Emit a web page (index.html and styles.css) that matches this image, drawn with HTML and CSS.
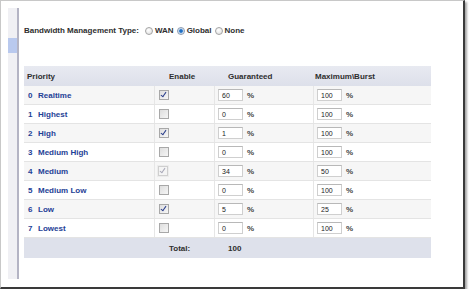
FILE: index.html
```html
<!DOCTYPE html>
<html lang="en">
  <head>
    <meta charset="UTF-8" />
    <title>Bandwidth Management</title>
    <link rel="stylesheet" href="styles.css">
  </head>
  <body>
    <div class="window">
      <!-- Sidebar -->
      <aside class="sidebar">
        <div class="side-active"></div>
      </aside>

      <!-- Main -->
      <main class="main">
        <div class="type-row">
          <span class="type-label">Bandwidth Management Type:</span>
          <span class="radio"></span><span class="opt">WAN</span>
          <span class="radio on"></span><span class="opt">Global</span>
          <span class="radio"></span><span class="opt">None</span>
        </div>

        <div class="qos">
          <div class="head">
            <span>Priority</span>
            <span>Enable</span>
            <span>Guaranteed</span>
            <span>Maximum\Burst</span>
          </div>

          <div class="row alt">
            <div class="cell name"><span class="num">0</span>Realtime</div>
            <div class="cell"><span class="cb checked"></span></div>
            <div class="cell"><span class="field">60</span><span class="pct">%</span></div>
            <div class="cell"><span class="field">100</span><span class="pct">%</span></div>
          </div>
          <div class="row">
            <div class="cell name"><span class="num">1</span>Highest</div>
            <div class="cell"><span class="cb"></span></div>
            <div class="cell"><span class="field">0</span><span class="pct">%</span></div>
            <div class="cell"><span class="field">100</span><span class="pct">%</span></div>
          </div>
          <div class="row alt">
            <div class="cell name"><span class="num">2</span>High</div>
            <div class="cell"><span class="cb checked"></span></div>
            <div class="cell"><span class="field">1</span><span class="pct">%</span></div>
            <div class="cell"><span class="field">100</span><span class="pct">%</span></div>
          </div>
          <div class="row">
            <div class="cell name"><span class="num">3</span>Medium High</div>
            <div class="cell"><span class="cb"></span></div>
            <div class="cell"><span class="field">0</span><span class="pct">%</span></div>
            <div class="cell"><span class="field">100</span><span class="pct">%</span></div>
          </div>
          <div class="row alt">
            <div class="cell name"><span class="num">4</span>Medium</div>
            <div class="cell"><span class="cb-wrap"><span class="cb checked disabled"></span></span></div>
            <div class="cell"><span class="field">34</span><span class="pct">%</span></div>
            <div class="cell"><span class="field">50</span><span class="pct">%</span></div>
          </div>
          <div class="row">
            <div class="cell name"><span class="num">5</span>Medium Low</div>
            <div class="cell"><span class="cb"></span></div>
            <div class="cell"><span class="field">0</span><span class="pct">%</span></div>
            <div class="cell"><span class="field">100</span><span class="pct">%</span></div>
          </div>
          <div class="row alt">
            <div class="cell name"><span class="num">6</span>Low</div>
            <div class="cell"><span class="cb checked"></span></div>
            <div class="cell"><span class="field">5</span><span class="pct">%</span></div>
            <div class="cell"><span class="field">25</span><span class="pct">%</span></div>
          </div>
          <div class="row">
            <div class="cell name"><span class="num">7</span>Lowest</div>
            <div class="cell"><span class="cb"></span></div>
            <div class="cell"><span class="field">0</span><span class="pct">%</span></div>
            <div class="cell"><span class="field">100</span><span class="pct">%</span></div>
          </div>

          <div class="total">
            <span></span>
            <span>Total:</span>
            <span>100</span>
            <span></span>
          </div>
        </div>
      </main>
    </div>
  </body>
</html>
```

FILE: styles.css
```css
body {
  margin: 0;
  padding: 0;
  background: #fff;
  font-family: "Liberation Sans", Arial, sans-serif;
  font-size: 8px;
  color: #333;
}
.window {
  display: flex;
  width: 455px;
  height: 271px;
  padding: 7px 0 8px 7px;
  background: #fff;
  border-top: 1px solid #c8c8c8;
  border-left: 1px solid #c8c8c8;
  border-right: 2px solid #3a3a3a;
  border-bottom: 2px solid #3a3a3a;
  box-shadow: 2px 2px 2px rgba(0, 0, 0, 0.35);
}
/* Sidebar */
.sidebar {
  width: 9px;
  background: #f0f0f4;
  border-right: 2px solid #b4b4c4;
}
.side-active {
  margin-top: 30px;
  height: 15px;
  background: #b9c9ee;
}
/* Main */
.main {
  padding: 17px 0 0 5px;
}
.type-row {
  display: flex;
  align-items: center;
  height: 11px;
  font-weight: bold;
  color: #2e2e2e;
}
.type-label {
  margin-right: 6px;
}
.opt {
  margin: 0 3px 0 2px;
}
.radio {
  display: inline-block;
  width: 6px;
  height: 6px;
  border: 1px solid #a4a4a4;
  border-radius: 50%;
  background: radial-gradient(circle at 40% 35%, #fff, #dcdcdc);
}
.radio.on {
  background: radial-gradient(circle, #1f6fc4 0 1.4px, #9ec3ea 2px, #e8eef6 3px);
  border-color: #8a9ab0;
}
/* Table */
.qos {
  width: 407px;
  margin-top: 30px;
}
.head,
.total {
  display: grid;
  grid-template-columns: 142px 59px 87px auto;
  align-items: center;
  height: 20px;
  padding-left: 3px;
  font-weight: bold;
  color: #2e2e2e;
}
.head {
  background: linear-gradient(#e8eaf1, #dde0ea);
}
.total {
  background: #dee1eb;
}
.row {
  display: grid;
  grid-template-columns: 131px 60px 99px auto;
  height: 18px;
  border-bottom: 1px solid #e4e4e4;
}
.row.alt {
  background: #f6f6f6;
}
.cell {
  display: flex;
  align-items: center;
  padding-left: 3px;
  border-right: 1px solid #e6e6e6;
}
.cell:last-child {
  border-right: none;
}
.cell.name {
  padding-left: 4px;
  font-weight: bold;
  color: #1e4196;
}
.num {
  width: 10px;
}
.cb {
  display: inline-block;
  position: relative;
  width: 8px;
  height: 8px;
  margin-left: 1px;
  border: 1px solid #a8a8a8;
  background: linear-gradient(135deg, #dedede, #f6f6f6);
}
.cb.checked::after {
  content: "";
  position: absolute;
  left: 2px;
  top: 0;
  width: 2px;
  height: 5px;
  border-right: 1px solid #2b3f8c;
  border-bottom: 1px solid #2b3f8c;
  transform: rotate(35deg);
}
.cb-wrap {
  display: inline-flex;
  align-items: center;
  justify-content: center;
  width: 12px;
  height: 12px;
  margin-left: -1px;
  background: #ececec;
}
.cb.disabled {
  margin-left: 0;
  border-color: #cfcfcf;
  background: #f4f4f4;
}
.cb.disabled::after {
  border-color: #a8a8b8;
}
.field {
  display: inline-block;
  box-sizing: border-box;
  width: 25px;
  height: 12px;
  padding: 1px 0 0 3px;
  border: 1px solid #cfcfcf;
  border-top-color: #b8b8b8;
  background: #fff;
  font-size: 7px;
  line-height: 9px;
  color: #222;
}
.pct {
  margin-left: 4px;
  font-weight: bold;
  color: #444;
}
```
